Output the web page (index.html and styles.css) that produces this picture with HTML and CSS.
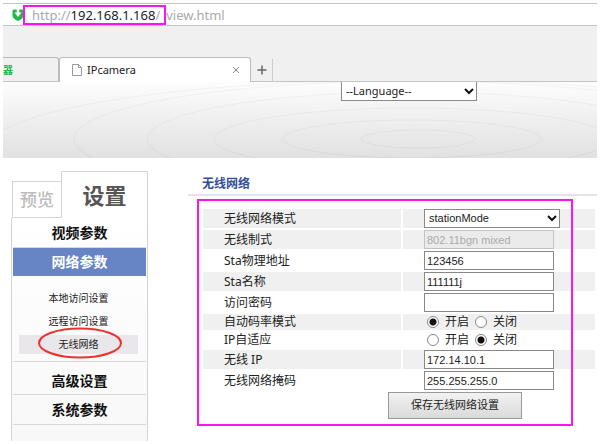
FILE: index.html
```html
<!DOCTYPE html>
<html lang="zh-CN">
<head>
<meta charset="utf-8">
<title>IPcamera</title>
<link rel="stylesheet" href="styles.css">
</head>
<body>
<div class="window">
  <div class="address">
    <svg class="shield" viewBox="0 0 12 14" aria-hidden="true"><path d="M1.500 1.500h2.500l2 1 2-1h2.500l1 1v5C11.500 10 9 12 6 13 3 12 .5 10 .5 7.500v-5z" fill="#22b84c"/><path d="M4.800 2h2.400v2.500h2.300L6 9 2.500 4.500h2.300z" fill="#fff"/></svg>
    <p class="url"><span class="marked">http://<b>192.168.1.168</b>/</span>view.html</p>
  </div>
  <div class="tabs">
    <div class="tab tab-back">器</div>
    <div class="tab tab-active">
      <svg class="page-icon" viewBox="0 0 10 12" aria-hidden="true"><path d="M.5.5h6l3 3v8h-9zM6.500.5v3h3" fill="#fff" stroke="#999"/></svg>
      <span class="tab-title">IPcamera</span>
      <button class="close" type="button" aria-label="关闭标签"><svg viewBox="0 0 8 8"><path d="M1 1l6 6M7 1 1 7" stroke="#888" fill="none"/></svg></button>
    </div>
    <button class="new-tab" type="button" aria-label="新标签"><svg viewBox="0 0 10 10"><path d="M5 .5v9M.5 5h9" stroke="#666" stroke-width="1.500" fill="none"/></svg></button>
  </div>
  <header class="banner">
    <svg class="rings" viewBox="3 82 594 76" preserveAspectRatio="none" aria-hidden="true">
      <defs>
        <linearGradient id="fade" gradientUnits="userSpaceOnUse" x1="0" y1="82" x2="0" y2="158">
          <stop offset="0" stop-color="#f4f4f4"/><stop offset="1" stop-color="#d8d8d8"/>
        </linearGradient>
      </defs>
      <g fill="none" stroke="url(#fade)">
        <ellipse cx="418" cy="139" rx="57" ry="9"/>
        <ellipse cx="412" cy="139" rx="129" ry="19"/>
        <ellipse cx="412" cy="139" rx="198" ry="31"/>
        <ellipse cx="412" cy="139" rx="265" ry="47"/>
        <ellipse cx="412" cy="139" rx="338" ry="58"/>
        <ellipse cx="412" cy="149" rx="425" ry="69"/>
      </g>
    </svg>
    <div class="select language">
      <select aria-label="Language"><option>--Language--</option></select>
      <svg viewBox="0 0 10 7" aria-hidden="true"><path d="M1 1l4 4 4-4" fill="none" stroke="#111" stroke-width="2"/></svg>
    </div>
  </header>
  <div class="content">
    <aside class="sidebar">
      <div class="modes">
        <a class="mode" href="#preview">预览</a>
        <a class="mode mode-active" href="#settings">设置</a>
      </div>
      <nav class="menu">
        <a class="group" href="#video">视频参数</a>
        <a class="group group-active" href="#network">网络参数</a>
        <div class="submenu">
          <a href="#local">本地访问设置</a>
          <a href="#remote">远程访问设置</a>
          <a class="current" href="#wireless">无线网络<svg class="circle" viewBox="0 0 84 32" aria-hidden="true"><ellipse cx="42" cy="16" rx="41" ry="14.500" fill="none" stroke="#ed3030" stroke-width="2"/></svg></a>
        </div>
        <a class="group group-tall" href="#advanced">高级设置</a>
        <a class="group" href="#system">系统参数</a>
      </nav>
    </aside>
    <main class="main">
      <h1>无线网络</h1>
      <form class="panel">
        <table>
          <tr class="shade"><th><label for="mode">无线网络模式</label></th><td><div class="select mode-select"><select id="mode"><option>stationMode</option></select><svg viewBox="0 0 10 7" aria-hidden="true"><path d="M1 1l4 4 4-4" fill="none" stroke="#111" stroke-width="2"/></svg></div></td></tr>
          <tr class="shade"><th><label for="standard">无线制式</label></th><td><input class="field" id="standard" value="802.11bgn mixed" disabled></td></tr>
          <tr><th><label for="mac">Sta物理地址</label></th><td><input class="field" id="mac" value="123456"></td></tr>
          <tr class="shade"><th><label for="name">Sta名称</label></th><td><input class="field" id="name" value="111111j"></td></tr>
          <tr><th><label for="key">访问密码</label></th><td><input class="field" id="key"></td></tr>
          <tr class="shade short"><th>自动码率模式</th><td><div class="radios"><label><input type="radio" name="rate" checked>开启</label><label><input type="radio" name="rate">关闭</label></div></td></tr>
          <tr class="short"><th>IP自适应</th><td><div class="radios"><label><input type="radio" name="adapt">开启</label><label><input type="radio" name="adapt" checked>关闭</label></div></td></tr>
          <tr class="shade"><th><label for="ip">无线 IP</label></th><td><input class="field" id="ip" value="172.14.10.1"></td></tr>
          <tr><th><label for="mask">无线网络掩码</label></th><td><input class="field" id="mask" value="255.255.255.0"></td></tr>
        </table>
        <button class="save" type="button">保存无线网络设置</button>
      </form>
    </main>
  </div>
</div>
</body>
</html>
```
FILE: styles.css
```css
* { box-sizing: border-box; }
body {
  margin: 0;
  background: #fff;
  color: #222;
  font: 12px/16px "Noto Sans", "Noto Sans CJK SC", sans-serif;
}
a { color: inherit; text-decoration: none; }
button, input, select { font: inherit; color: inherit; margin: 0; }
svg { display: block; }

.window { margin: 3px 3px 0; }

.address {
  display: flex;
  align-items: center;
  height: 23px;
  padding-left: 9px;
  border-top: 1px solid #c4c4c4;
  border-bottom: 1px solid #c4c4c4;
}
.shield { width: 12px; height: 14px; }
.url { display: flex; align-items: center; margin: 0 0 0 -1px; font-size: 13px; color: #aaa; }
.url b { font-weight: 400; color: #222; }
.marked {
  height: 20px;
  padding: 0 4px 0 7px;
  border: 2px solid #ff14f0;
  line-height: 16px;
}

.tabs {
  display: flex;
  align-items: flex-end;
  height: 56px;
  background: #f0f0f0;
  border-bottom: 1px solid #c4c4c4;
}
.tab {
  display: flex;
  align-items: center;
  height: 24px;
  border: 1px solid #bbb;
  border-bottom: 0;
  font-size: 11px;
}
.tab-back {
  width: 56px;
  border-left: 0;
  border-radius: 0 3px 0 0;
  color: #22b84c;
  font-weight: 700;
  font-size: 10px;
}
.tab-active {
  width: 192px;
  height: 25px;
  margin-bottom: -1px;
  padding: 0 10px 0 12px;
  gap: 5px;
  border-radius: 3px 3px 0 0;
  background: #fff;
}
.page-icon { width: 10px; height: 12px; }
.tab-title { flex: 1; }
.close, .new-tab { padding: 0; border: 0; background: none; }
.close svg { width: 8px; height: 8px; }
.new-tab {
  display: grid;
  place-items: center;
  width: 22px;
  height: 22px;
  border-right: 1px solid #ccc;
}
.new-tab svg { width: 10px; height: 10px; }

.banner {
  position: relative;
  height: 76px;
  padding: 0 120px 0 338px;
  background: linear-gradient(#fdfdfd, #e1e1e1);
}
.rings { position: absolute; inset: 0; width: 100%; height: 100%; }

.select { position: relative; }
.select select {
  display: block;
  width: 100%;
  height: 19px;
  padding: 0 4px;
  border: 1px solid #888;
  border-radius: 0;
  background: #fff;
  appearance: none;
}
.select svg {
  position: absolute;
  right: 3px;
  top: 6px;
  width: 10px;
  height: 7px;
  pointer-events: none;
}
.language select { border-top: 0; font-size: 11px; }

.content {
  display: grid;
  grid-template-columns: 137px minmax(0, 1fr);
  gap: 40px;
  padding: 13px 0 0 8px;
}

.modes { display: flex; align-items: flex-end; }
.mode {
  flex: 1;
  margin-left: 1px;
  border: 1px solid #d4d4d4;
  border-right: 0;
  color: #bbb;
  font-size: 17px;
  font-weight: 500;
  line-height: 35px;
  text-align: center;
}
.mode-active {
  flex: 0 0 87px;
  margin-left: 0;
  border-right: 1px solid #d4d4d4;
  border-bottom: 0;
  color: #555;
  font-size: 22px;
  font-weight: 700;
  line-height: 46px;
}
.menu {
  padding: 0 1px 16px;
  border: 1px solid #d4d4d4;
  border-top: 0;
  border-bottom: 0;
  background: linear-gradient(#fff, #f8f8f8);
}
.group {
  display: block;
  height: 30px;
  border-bottom: 1px solid #d8d8d8;
  color: #111;
  font-size: 14px;
  font-weight: 700;
  line-height: 30px;
  text-align: center;
}
.group-active {
  height: 28px;
  border: 0;
  background: #6784c4;
  color: #fff;
  line-height: 28px;
}
.group-tall { height: 33px; line-height: 38px; }
.submenu {
  display: grid;
  gap: 4px;
  padding: 13px 8px 7px 6px;
  border-bottom: 1px solid #d8d8d8;
  font-size: 10px;
  line-height: 19px;
  text-align: center;
}
.current { position: relative; background: #e9e7e9; }
.circle {
  position: absolute;
  left: 19px;
  top: -8px;
  width: 84px;
  height: 32px;
}

.main h1 {
  margin: 0;
  padding: 5px 14px 2px;
  border-bottom: 2px solid #e4e4e4;
  color: #32509b;
  font-size: 12px;
  line-height: 16px;
}
.panel { position: relative; padding: 11px 0 0 13px; }
.panel::after {
  content: "";
  position: absolute;
  inset: 3px 24px -7px 9px;
  border: 2px solid #ff14f0;
  pointer-events: none;
}
table { width: 100%; border-collapse: separate; border-spacing: 2px; }
th, td { height: 19px; padding: 0; font-weight: 400; text-align: left; }
th { width: 198px; padding-left: 21px; }
td { padding-left: 21px; }
.short th, .short td { height: 16px; }
.shade th, .shade td { background: #f0f0f0; }
.field, .mode-select select { font: 11px/15px "Liberation Sans", sans-serif; }
.field {
  display: block;
  width: 130px;
  height: 19px;
  padding: 0 2px;
  border: 1px solid #888;
  border-radius: 0;
  background: #fff;
}
.field:disabled { border-color: #c4c4c4; background: #ebebeb; color: #aaa; }
.mode-select { width: 136px; }
.radios { display: flex; gap: 6px; padding-left: 3px; }
.radios label { display: flex; align-items: center; gap: 6px; }
.radios input {
  width: 12px;
  height: 12px;
  border: 1px solid #888;
  border-radius: 50%;
  background: #fff;
  appearance: none;
}
.radios input:checked { background: radial-gradient(circle, #111 0 3px, #fff 4px); }
.save {
  display: block;
  width: 134px;
  height: 27px;
  margin-left: 187px;
  padding: 0 0 2px;
  border: 1px solid #999;
  background: linear-gradient(#f2f2f2, #dadada);
  font-size: 11px;
}
```
